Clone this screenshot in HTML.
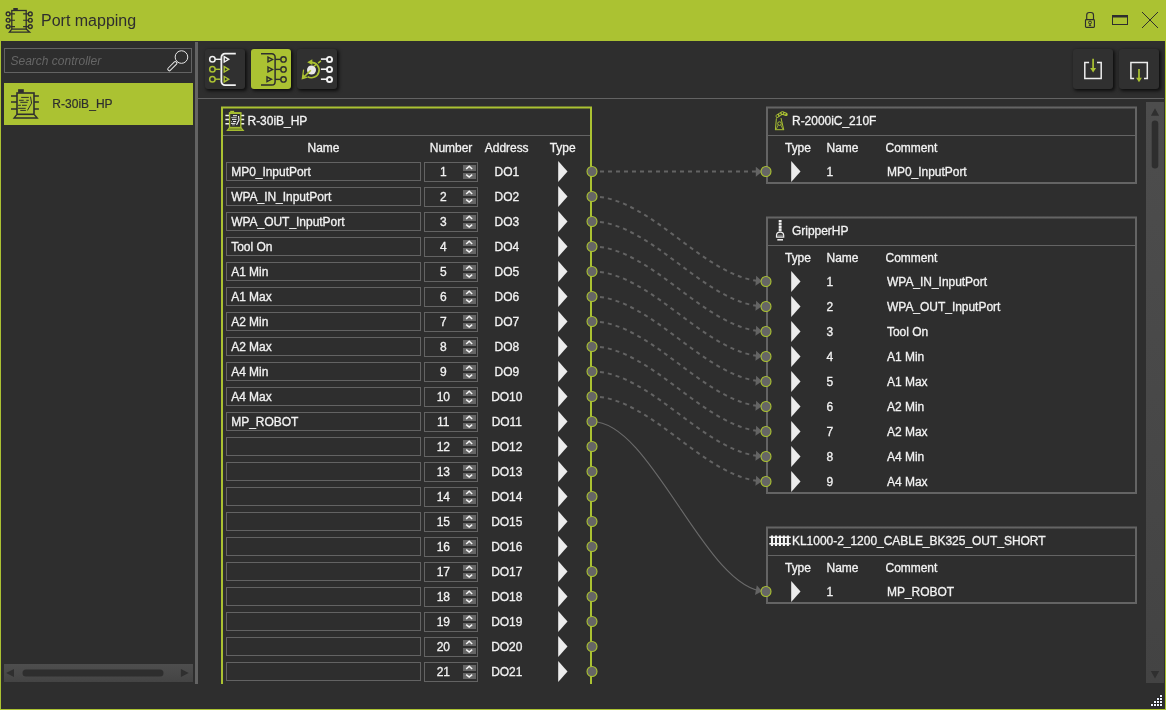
<!DOCTYPE html>
<html><head><meta charset="utf-8"><title>Port mapping</title>
<style>
html,body{margin:0;padding:0;background:#2E2E2E;}
body{width:1166px;height:710px;overflow:hidden;font-family:"Liberation Sans",sans-serif;font-size:12px;color:#F2F2F2;}
#win{will-change:transform;position:absolute;left:0;top:0;width:1166px;height:710px;background:#2E2E2E;overflow:hidden;}
#win:after{content:"";position:absolute;left:0;top:0;width:1164px;height:708px;border:1px solid #ABC232;pointer-events:none;}
#title{position:absolute;left:0;top:0;width:1166px;height:41px;background:#ABC232;}
#title .cap{position:absolute;left:41px;top:12px;font-size:16px;line-height:18px;color:#2E2E2E;white-space:nowrap;}
#title svg{position:absolute;}
/* left panel */
#search{position:absolute;left:4px;top:48px;width:186px;height:23px;border:1px solid #636363;}
#search span{position:absolute;left:5.5px;top:5px;font-style:italic;color:#666;line-height:14px;white-space:nowrap;}
#search svg{position:absolute;left:151px;top:-3px;}
#item{position:absolute;left:4px;top:83px;width:189px;height:42px;background:#ABC232;}
#item span{position:absolute;left:48.2px;top:14px;letter-spacing:0.05px;-webkit-text-stroke:0.2px #2E2E2E;line-height:14px;color:#2E2E2E;white-space:nowrap;}
#item svg{position:absolute;left:0;top:0;}
#hsb{position:absolute;left:4px;top:664px;}
#split{position:absolute;left:195px;top:42px;width:3px;height:642px;background:#636363;}
#tsep{position:absolute;left:198px;top:98px;width:966px;height:1px;background:#636363;}
.tb{position:absolute;top:49px;width:40px;height:40px;border-radius:3px;background:#303030;box-shadow:1.5px 1.5px 3.5px rgba(0,0,0,.7);}
.tb.on{background:#ABC232;}
.tb svg{position:absolute;left:0;top:0;}
/* canvas */
#canvas{position:absolute;left:198px;top:99px;width:966px;height:585px;overflow:hidden;}
#wires,#dots{position:absolute;left:0;top:0;}
.wd{fill:none;stroke:#636363;stroke-width:2;stroke-dasharray:4 4;stroke-dashoffset:-8;}
.ws{fill:none;stroke:#6A6A6A;stroke-width:1.15;}
.ah{fill:#646464;stroke:none;}
.at{fill:none;stroke:#666;stroke-width:2;}
.pc{fill:#666;stroke:#ABC232;stroke-width:1.08;}
.t,.nm,.nb span{-webkit-text-stroke:0.3px #F2F2F2;letter-spacing:-0.03px;}
.t{position:absolute;line-height:14px;white-space:nowrap;color:#F2F2F2;}
.t.c{text-align:center;}
.hb{position:absolute;height:3px;}
.hb.g{background:linear-gradient(to bottom,rgba(171,194,50,.5) 0,rgba(171,194,50,.5) 1px,#ABC232 1px,#ABC232 2px,rgba(171,194,50,.5) 2px,rgba(171,194,50,.5) 3px);}
.hb.y{background:linear-gradient(to bottom,rgba(100,100,100,.5) 0,rgba(100,100,100,.5) 1px,#646464 1px,#646464 2px,rgba(100,100,100,.5) 2px,rgba(100,100,100,.5) 3px);}
.vb{position:absolute;width:2px;}
.bb{position:absolute;height:2px;}
.g{background:#ABC232;}
.y{background:#646464;}
.sep{position:absolute;height:1px;background:#646464;}
svg.ico{position:absolute;}
.nm{position:absolute;box-sizing:border-box;width:195px;height:19px;border:1px solid #636363;padding-left:4.2px;line-height:19px;white-space:nowrap;}
.nb{position:absolute;box-sizing:border-box;width:54px;height:20px;border:1px solid #636363;}
.nb span{position:absolute;left:-0.7px;top:2px;width:38px;text-align:center;line-height:14px;}
.nb svg{position:absolute;left:38px;top:2px;}
.sb{fill:#666;}
.sc{fill:none;stroke:#F4F4F4;stroke-width:1.5;}
svg.tri{position:absolute;}
svg.tri path{fill:#ECECEC;}
#vsb{position:absolute;left:948px;top:3px;}
#grip{position:absolute;left:1150px;top:694px;}

</style></head><body>
<div id="win">
<div id="title">
<svg style="left:0;top:0" width="40" height="40" viewBox="0 0 40 40" fill="none" stroke="#2E2E2E" stroke-width="1.3">
<rect x="11.8" y="10.5" width="14.4" height="18.6"/>
<rect x="13.3" y="8" width="4.5" height="2.2" fill="#2E2E2E" stroke="none"/>
<path d="M11.8,29.1 L9.4,32.2 L29.6,32.2 L26.2,29.1" stroke-width="1.3"/>
<circle cx="8.1" cy="13.9" r="1.9" stroke-width="1.4"/><circle cx="8.1" cy="20.25" r="1.9" stroke-width="1.4"/><circle cx="8.1" cy="26.6" r="1.9" stroke-width="1.4"/>
<circle cx="30.3" cy="13.9" r="1.9" stroke-width="1.4"/><circle cx="30.3" cy="20.25" r="1.9" stroke-width="1.4"/><circle cx="30.3" cy="26.6" r="1.9" stroke-width="1.4"/>
<path d="M10.2,13.9H15M10.2,20.25H15M10.2,26.6H15M23.1,13.9H28.2M23.1,20.25H28.2M23.1,26.6H28.2" stroke-width="1.2"/>
</svg>
<div class="cap">Port mapping</div>
<svg style="left:1083px;top:10px" width="14" height="20" viewBox="0 0 14 20" fill="none" stroke="#2E2E2E" stroke-width="1.15">
<rect x="2.5" y="9.6" width="8.9" height="7.7" rx="0.9"/>
<path d="M3.7,9.6 V5.2 Q3.7,2.5 6.3,2.5 H7.9 Q10.5,2.5 10.5,5.2 V9.6"/>
<circle cx="7" cy="12.5" r="1.45" stroke-width="1"/><path d="M7,14 V15.2 M5.8,15.5 H8.2" stroke-width="0.9"/>
</svg>
<svg style="left:1111px;top:13px" width="18" height="14" viewBox="0 0 18 14" fill="none" stroke="#2E2E2E" stroke-width="1">
<rect x="1.5" y="2.5" width="15" height="9"/><rect x="1" y="2" width="16" height="2.5" fill="#2E2E2E" stroke="none"/>
</svg>
<svg style="left:1140px;top:10px" width="20" height="20" viewBox="0 0 20 20" fill="none" stroke="#2E2E2E" stroke-width="1">
<path d="M2,2 L18,18 M18,2 L2,18"/>
</svg>
</div>

<div id="search"><span>Search controller</span>
<svg width="40" height="30" viewBox="156 46 40 30" fill="none" stroke="#E6E6E6" stroke-width="1"><circle cx="181.45" cy="57.05" r="6.3"/><rect transform="translate(176.3,62.2) rotate(135)" x="0" y="-1.55" width="11.3" height="3.1" rx="1.2"/></svg>
</div>
<div id="item">
<svg width="44" height="42" viewBox="4 83 44 42" fill="none" stroke="#2E2E2E" stroke-width="1.6">
<rect x="17" y="93" width="17" height="21.3"/>
<rect x="18.1" y="89.2" width="5.7" height="3.6" fill="#2E2E2E" stroke="none"/>
<path d="M16.6,114.8 L14,118 L37.3,118 L34.4,114.8" stroke-width="1.3"/>
<path d="M11,96.1H17M11,102.1H17M11,109H17M34,96.1H38.9M34,102.1H38.9M34,109H38.9" stroke-width="1.5"/>
<path d="M21.2,97.4H28.8M18.9,100.3H23.7M26.3,100.3H28.8M20.3,102.3H27.7M18.1,105.3H20.9M22,105.3H26.8M18.1,108.3H25.7M20.3,110.4H25.9" stroke-width="1"/>
<path d="M30.5,96.7 L31.6,103.2 L27.4,110.5" stroke-width="1"/>
</svg>
<span>R-30iB_HP</span></div>
<svg id="hsb" width="189" height="18" viewBox="4 664 189 18"><defs><linearGradient id="hg" x1="0" y1="0" x2="0" y2="1"><stop offset="0" stop-color="#4E4E4E"/><stop offset="1" stop-color="#444444"/></linearGradient></defs><rect x="4" y="664" width="189" height="18" fill="url(#hg)"/><path fill="#2F2F2F" d="M6.1,673 L14,668.9 L14,677.1 Z M188.7,673 L180.9,668.9 L180.9,677.1 Z"/><rect x="22.5" y="669.4" width="141" height="7" rx="3.5" fill="#2E2E2E"/></svg>
<div id="split"></div>

<div id="tsep"></div>
<div class="tb" style="left:205px">
<svg width="40" height="40" viewBox="0 0 40 40" fill="none" stroke-width="1.4">
<path d="M30.8,4.7 H20 A3.6,3.6 0 0 0 16.4,8.3 V32.5 A3.6,3.6 0 0 0 20,36.1 H30.8" stroke="#F2F2F2" stroke-width="1.8"/>
<circle cx="7.4" cy="10.3" r="2.75" stroke="#F2F2F2" stroke-width="1.5"/><path d="M10.2,10.3 H16" stroke="#F2F2F2"/><path d="M19.2,7.6 L23.7,10.3 L19.2,13 Z" stroke="#F2F2F2"/>
<circle cx="7.4" cy="20.3" r="2.75" stroke="#ABC232" stroke-width="1.5"/><path d="M10.2,20.3 H15.6" stroke="#ABC232"/><path d="M19.2,17.6 L23.7,20.3 L19.2,23 Z" stroke="#ABC232"/>
<circle cx="7.4" cy="30.2" r="2.75" stroke="#ABC232" stroke-width="1.5"/><path d="M10.2,30.2 H15.6" stroke="#ABC232"/><path d="M19.2,27.5 L23.7,30.2 L19.2,32.9 Z" stroke="#ABC232"/>
</svg></div>
<div class="tb on" style="left:251px">
<svg width="40" height="40" viewBox="0 0 40 40" fill="none" stroke="#2E2E2E" stroke-width="1.4">
<path d="M10,4.8 H20.8 A3.3,3.3 0 0 1 24.1,8.1 V32.8 A3.3,3.3 0 0 1 20.8,36.1 H10" stroke-width="1.5"/>
<path d="M17,8.1 L21.5,10.5 L17,12.9 Z"/><path d="M24.1,10.4 H29.6"/><circle cx="32.5" cy="10.4" r="2.7"/>
<path d="M17,18 L21.5,20.4 L17,22.8 Z"/><path d="M24.1,20.4 H29.6"/><circle cx="32.5" cy="20.4" r="2.7"/>
<path d="M16,27.9 L20.5,30.3 L16,32.7 Z"/><path d="M24.1,30.4 H29.6"/><circle cx="32.5" cy="30.4" r="2.7"/>
</svg></div>
<div class="tb" style="left:297px">
<svg width="40" height="40" viewBox="0 0 40 40" fill="none" stroke-width="1.4">
<circle cx="32.5" cy="10.4" r="2.55" stroke="#F2F2F2" stroke-width="1.9"/><path d="M23.9,10.1 H30" stroke="#F2F2F2" stroke-width="1.6"/>
<circle cx="32.5" cy="20.4" r="2.55" stroke="#F2F2F2" stroke-width="1.9"/><path d="M23.9,20.2 H30" stroke="#F2F2F2" stroke-width="1.6"/>
<circle cx="32.5" cy="30.5" r="2.55" stroke="#F2F2F2" stroke-width="1.9"/><path d="M23.9,30.2 H30" stroke="#F2F2F2" stroke-width="1.6"/>
<circle cx="14.5" cy="21" r="4.5" fill="#E9E9E9"/>
<path d="M14.3,13.3 A7.7,7.7 0 1 1 10.6,27.7" stroke="#ABC232" stroke-width="1.7"/>
<path d="M10.2,13.2 L15.3,10.2 L15.3,16 Z" fill="#ABC232"/>
<path d="M23.9,11.9 L16.8,17.4" stroke="#ABC232" stroke-dasharray="3.6 2.6" stroke-width="1.5"/>
<path d="M13.8,21.2 L7.5,27.5" stroke="#ABC232" stroke-width="1.6"/>
<path d="M6.6,20.6 L5.3,29.6 L10.3,28.1" stroke="#ABC232" stroke-width="1.2"/><path d="M4.8,30.2 L6.2,25 L9.2,28.4 Z" fill="#ABC232"/>
</svg></div>
<div class="tb" style="left:1073px">
<svg width="40" height="40" viewBox="0 0 40 40" fill="none" stroke-width="1.5">
<path d="M16.1,13.5 H11.8 V29.5 H28.2 V13.5 H24" stroke="#EDEDED"/>
<path d="M20.1,9.8 V20" stroke="#ABC232" stroke-width="1.7"/><path d="M17.2,18.9 L23.1,18.9 L20.1,23.5 Z" fill="#ABC232"/>
</svg></div>
<div class="tb" style="left:1119px">
<svg width="40" height="40" viewBox="0 0 40 40" fill="none" stroke-width="1.5">
<path d="M15.1,29.5 H11.9 V13.5 H28.3 V29.5 H25" stroke="#EDEDED"/>
<path d="M20,19.9 V30" stroke="#ABC232" stroke-width="1.7"/><path d="M17.1,28.8 L22.9,28.8 L20,33.2 Z" fill="#ABC232"/>
</svg></div>

<div id="canvas">
<svg id="wires" width="966" height="585" viewBox="198 99 966 585">
<path class="wd" d="M592.0,171.5 L766.0,171.5"/>
<path class="wd" d="M592.0,196.5 C652.0,196.5 706.0,281.5 766.0,281.5"/>
<path class="wd" d="M592.0,221.5 C652.0,221.5 706.0,306.5 766.0,306.5"/>
<path class="wd" d="M592.0,246.5 C652.0,246.5 706.0,331.5 766.0,331.5"/>
<path class="wd" d="M592.0,271.5 C652.0,271.5 706.0,356.5 766.0,356.5"/>
<path class="wd" d="M592.0,296.5 C652.0,296.5 706.0,381.5 766.0,381.5"/>
<path class="wd" d="M592.0,321.5 C652.0,321.5 706.0,406.5 766.0,406.5"/>
<path class="wd" d="M592.0,346.5 C652.0,346.5 706.0,431.5 766.0,431.5"/>
<path class="wd" d="M592.0,371.5 C652.0,371.5 706.0,456.5 766.0,456.5"/>
<path class="wd" d="M592.0,396.5 C652.0,396.5 706.0,481.5 766.0,481.5"/>
<path class="ws" d="M592.0,421.5 C652.0,421.5 706.0,591.5 766.0,591.5"/>
<path class="ah" transform="translate(762,171.8) rotate(0)" d="M0,0 L-6.2,-5 L-6.2,5 Z"/>
<path class="ah" transform="translate(762,281.2) rotate(4.5)" d="M0,0 L-6.2,-5 L-6.2,5 Z"/>
<path class="ah" transform="translate(762,306.2) rotate(4.5)" d="M0,0 L-6.2,-5 L-6.2,5 Z"/>
<path class="ah" transform="translate(762,331.2) rotate(4.5)" d="M0,0 L-6.2,-5 L-6.2,5 Z"/>
<path class="ah" transform="translate(762,356.2) rotate(4.5)" d="M0,0 L-6.2,-5 L-6.2,5 Z"/>
<path class="ah" transform="translate(762,381.2) rotate(4.5)" d="M0,0 L-6.2,-5 L-6.2,5 Z"/>
<path class="ah" transform="translate(762,406.2) rotate(4.5)" d="M0,0 L-6.2,-5 L-6.2,5 Z"/>
<path class="ah" transform="translate(762,431.2) rotate(4.5)" d="M0,0 L-6.2,-5 L-6.2,5 Z"/>
<path class="ah" transform="translate(762,456.2) rotate(4.5)" d="M0,0 L-6.2,-5 L-6.2,5 Z"/>
<path class="ah" transform="translate(762,481.2) rotate(4.5)" d="M0,0 L-6.2,-5 L-6.2,5 Z"/>
<path class="ah" transform="translate(762,591.2) rotate(10.5)" d="M0,0 L-6.2,-5 L-6.2,5 Z"/>
</svg>
<div class="hb g" style="left:23px;top:7px;width:371px"></div>
<div class="vb g" style="left:23px;top:8px;height:600px"></div>
<div class="vb g" style="left:392px;top:8px;height:600px"></div>
<div class="sep" style="left:25px;top:36px;width:367px"></div>
<svg class="ico" style="left:26px;top:11px" width="22" height="22" viewBox="224 110 22 22" fill="none" stroke-width="1">
<path d="M225.4,115.5H229.4M225.4,119.5H229.4M225.4,123.7H229.4M241,115.5H244.2M241,119.5H244.2M241,123.7H244.2" stroke="#F4F4F4" stroke-width="1.4"/>
<rect x="229.55" y="113.2" width="11.25" height="14.3" stroke="#A5BC30" stroke-width="1.35"/>
<rect x="228.9" y="112.1" width="12.55" height="1.9" fill="#A5BC30"/>
<rect x="230.2" y="110.8" width="3.9" height="1.4" fill="#ABC232"/>
<path d="M229.3,127.9 L227.3,130.4 L243.3,130.4 L241.1,127.9 Z" stroke="#A5BC30" stroke-width="1.1" fill="#6F8026"/>
<path d="M233,115.7H237M232,119.4H236.6M233,121.5H236.1M231,123.4H235.5" stroke="#F0F0F0" stroke-width="1"/>
<path d="M231.2,117.6H236.6M231,121.5H231.8M232,124.8H234.8" stroke="#BDBDBD" stroke-width="0.9"/>
<path d="M238.5,116 L239,120.1 L236.5,125" stroke="#F4F4F4" stroke-width="1.1"/>
</svg>

<div class="t" style="left:49.5px;top:15px">R-30iB_HP</div>
<div class="t c" style="left:28px;top:42px;width:195px">Name</div>
<div class="t c" style="left:226px;top:42px;width:54px">Number</div>
<div class="t c" style="left:278.7px;top:42px;width:60px">Address</div>
<div class="t c" style="left:334.7px;top:42px;width:60px">Type</div>
<div class="nm" style="left:28px;top:63px">MP0_InputPort</div>
<div class="nb" style="left:226px;top:63px"><span>1</span><svg width="13" height="14" viewBox="0 0 13 14"><path class="sb" d="M0,0H13V6H0ZM0,8H13V14H0Z"/><path class="sc" d="M3.2,3.95 L6.2,1.2 L9.2,3.95 M3.2,9.6 L6.2,12.1 L9.2,9.6"/></svg></div>
<div class="t c" style="left:278.8px;top:66px;width:60px">DO1</div>
<svg class="tri" style="left:359px;top:62px" width="12" height="22"><path d="M1.2,0.1 L10.5,10.5 L1.2,20.9 Z"/></svg>
<div class="nm" style="left:28px;top:88px">WPA_IN_InputPort</div>
<div class="nb" style="left:226px;top:88px"><span>2</span><svg width="13" height="14" viewBox="0 0 13 14"><path class="sb" d="M0,0H13V6H0ZM0,8H13V14H0Z"/><path class="sc" d="M3.2,3.95 L6.2,1.2 L9.2,3.95 M3.2,9.6 L6.2,12.1 L9.2,9.6"/></svg></div>
<div class="t c" style="left:278.8px;top:91px;width:60px">DO2</div>
<svg class="tri" style="left:359px;top:87px" width="12" height="22"><path d="M1.2,0.1 L10.5,10.5 L1.2,20.9 Z"/></svg>
<div class="nm" style="left:28px;top:113px">WPA_OUT_InputPort</div>
<div class="nb" style="left:226px;top:113px"><span>3</span><svg width="13" height="14" viewBox="0 0 13 14"><path class="sb" d="M0,0H13V6H0ZM0,8H13V14H0Z"/><path class="sc" d="M3.2,3.95 L6.2,1.2 L9.2,3.95 M3.2,9.6 L6.2,12.1 L9.2,9.6"/></svg></div>
<div class="t c" style="left:278.8px;top:116px;width:60px">DO3</div>
<svg class="tri" style="left:359px;top:112px" width="12" height="22"><path d="M1.2,0.1 L10.5,10.5 L1.2,20.9 Z"/></svg>
<div class="nm" style="left:28px;top:138px">Tool On</div>
<div class="nb" style="left:226px;top:138px"><span>4</span><svg width="13" height="14" viewBox="0 0 13 14"><path class="sb" d="M0,0H13V6H0ZM0,8H13V14H0Z"/><path class="sc" d="M3.2,3.95 L6.2,1.2 L9.2,3.95 M3.2,9.6 L6.2,12.1 L9.2,9.6"/></svg></div>
<div class="t c" style="left:278.8px;top:141px;width:60px">DO4</div>
<svg class="tri" style="left:359px;top:137px" width="12" height="22"><path d="M1.2,0.1 L10.5,10.5 L1.2,20.9 Z"/></svg>
<div class="nm" style="left:28px;top:163px">A1 Min</div>
<div class="nb" style="left:226px;top:163px"><span>5</span><svg width="13" height="14" viewBox="0 0 13 14"><path class="sb" d="M0,0H13V6H0ZM0,8H13V14H0Z"/><path class="sc" d="M3.2,3.95 L6.2,1.2 L9.2,3.95 M3.2,9.6 L6.2,12.1 L9.2,9.6"/></svg></div>
<div class="t c" style="left:278.8px;top:166px;width:60px">DO5</div>
<svg class="tri" style="left:359px;top:162px" width="12" height="22"><path d="M1.2,0.1 L10.5,10.5 L1.2,20.9 Z"/></svg>
<div class="nm" style="left:28px;top:188px">A1 Max</div>
<div class="nb" style="left:226px;top:188px"><span>6</span><svg width="13" height="14" viewBox="0 0 13 14"><path class="sb" d="M0,0H13V6H0ZM0,8H13V14H0Z"/><path class="sc" d="M3.2,3.95 L6.2,1.2 L9.2,3.95 M3.2,9.6 L6.2,12.1 L9.2,9.6"/></svg></div>
<div class="t c" style="left:278.8px;top:191px;width:60px">DO6</div>
<svg class="tri" style="left:359px;top:187px" width="12" height="22"><path d="M1.2,0.1 L10.5,10.5 L1.2,20.9 Z"/></svg>
<div class="nm" style="left:28px;top:213px">A2 Min</div>
<div class="nb" style="left:226px;top:213px"><span>7</span><svg width="13" height="14" viewBox="0 0 13 14"><path class="sb" d="M0,0H13V6H0ZM0,8H13V14H0Z"/><path class="sc" d="M3.2,3.95 L6.2,1.2 L9.2,3.95 M3.2,9.6 L6.2,12.1 L9.2,9.6"/></svg></div>
<div class="t c" style="left:278.8px;top:216px;width:60px">DO7</div>
<svg class="tri" style="left:359px;top:212px" width="12" height="22"><path d="M1.2,0.1 L10.5,10.5 L1.2,20.9 Z"/></svg>
<div class="nm" style="left:28px;top:238px">A2 Max</div>
<div class="nb" style="left:226px;top:238px"><span>8</span><svg width="13" height="14" viewBox="0 0 13 14"><path class="sb" d="M0,0H13V6H0ZM0,8H13V14H0Z"/><path class="sc" d="M3.2,3.95 L6.2,1.2 L9.2,3.95 M3.2,9.6 L6.2,12.1 L9.2,9.6"/></svg></div>
<div class="t c" style="left:278.8px;top:241px;width:60px">DO8</div>
<svg class="tri" style="left:359px;top:237px" width="12" height="22"><path d="M1.2,0.1 L10.5,10.5 L1.2,20.9 Z"/></svg>
<div class="nm" style="left:28px;top:263px">A4 Min</div>
<div class="nb" style="left:226px;top:263px"><span>9</span><svg width="13" height="14" viewBox="0 0 13 14"><path class="sb" d="M0,0H13V6H0ZM0,8H13V14H0Z"/><path class="sc" d="M3.2,3.95 L6.2,1.2 L9.2,3.95 M3.2,9.6 L6.2,12.1 L9.2,9.6"/></svg></div>
<div class="t c" style="left:278.8px;top:266px;width:60px">DO9</div>
<svg class="tri" style="left:359px;top:262px" width="12" height="22"><path d="M1.2,0.1 L10.5,10.5 L1.2,20.9 Z"/></svg>
<div class="nm" style="left:28px;top:288px">A4 Max</div>
<div class="nb" style="left:226px;top:288px"><span>10</span><svg width="13" height="14" viewBox="0 0 13 14"><path class="sb" d="M0,0H13V6H0ZM0,8H13V14H0Z"/><path class="sc" d="M3.2,3.95 L6.2,1.2 L9.2,3.95 M3.2,9.6 L6.2,12.1 L9.2,9.6"/></svg></div>
<div class="t c" style="left:278.8px;top:291px;width:60px">DO10</div>
<svg class="tri" style="left:359px;top:287px" width="12" height="22"><path d="M1.2,0.1 L10.5,10.5 L1.2,20.9 Z"/></svg>
<div class="nm" style="left:28px;top:313px">MP_ROBOT</div>
<div class="nb" style="left:226px;top:313px"><span>11</span><svg width="13" height="14" viewBox="0 0 13 14"><path class="sb" d="M0,0H13V6H0ZM0,8H13V14H0Z"/><path class="sc" d="M3.2,3.95 L6.2,1.2 L9.2,3.95 M3.2,9.6 L6.2,12.1 L9.2,9.6"/></svg></div>
<div class="t c" style="left:278.8px;top:316px;width:60px">DO11</div>
<svg class="tri" style="left:359px;top:312px" width="12" height="22"><path d="M1.2,0.1 L10.5,10.5 L1.2,20.9 Z"/></svg>
<div class="nm" style="left:28px;top:338px"></div>
<div class="nb" style="left:226px;top:338px"><span>12</span><svg width="13" height="14" viewBox="0 0 13 14"><path class="sb" d="M0,0H13V6H0ZM0,8H13V14H0Z"/><path class="sc" d="M3.2,3.95 L6.2,1.2 L9.2,3.95 M3.2,9.6 L6.2,12.1 L9.2,9.6"/></svg></div>
<div class="t c" style="left:278.8px;top:341px;width:60px">DO12</div>
<svg class="tri" style="left:359px;top:337px" width="12" height="22"><path d="M1.2,0.1 L10.5,10.5 L1.2,20.9 Z"/></svg>
<div class="nm" style="left:28px;top:363px"></div>
<div class="nb" style="left:226px;top:363px"><span>13</span><svg width="13" height="14" viewBox="0 0 13 14"><path class="sb" d="M0,0H13V6H0ZM0,8H13V14H0Z"/><path class="sc" d="M3.2,3.95 L6.2,1.2 L9.2,3.95 M3.2,9.6 L6.2,12.1 L9.2,9.6"/></svg></div>
<div class="t c" style="left:278.8px;top:366px;width:60px">DO13</div>
<svg class="tri" style="left:359px;top:362px" width="12" height="22"><path d="M1.2,0.1 L10.5,10.5 L1.2,20.9 Z"/></svg>
<div class="nm" style="left:28px;top:388px"></div>
<div class="nb" style="left:226px;top:388px"><span>14</span><svg width="13" height="14" viewBox="0 0 13 14"><path class="sb" d="M0,0H13V6H0ZM0,8H13V14H0Z"/><path class="sc" d="M3.2,3.95 L6.2,1.2 L9.2,3.95 M3.2,9.6 L6.2,12.1 L9.2,9.6"/></svg></div>
<div class="t c" style="left:278.8px;top:391px;width:60px">DO14</div>
<svg class="tri" style="left:359px;top:387px" width="12" height="22"><path d="M1.2,0.1 L10.5,10.5 L1.2,20.9 Z"/></svg>
<div class="nm" style="left:28px;top:413px"></div>
<div class="nb" style="left:226px;top:413px"><span>15</span><svg width="13" height="14" viewBox="0 0 13 14"><path class="sb" d="M0,0H13V6H0ZM0,8H13V14H0Z"/><path class="sc" d="M3.2,3.95 L6.2,1.2 L9.2,3.95 M3.2,9.6 L6.2,12.1 L9.2,9.6"/></svg></div>
<div class="t c" style="left:278.8px;top:416px;width:60px">DO15</div>
<svg class="tri" style="left:359px;top:412px" width="12" height="22"><path d="M1.2,0.1 L10.5,10.5 L1.2,20.9 Z"/></svg>
<div class="nm" style="left:28px;top:438px"></div>
<div class="nb" style="left:226px;top:438px"><span>16</span><svg width="13" height="14" viewBox="0 0 13 14"><path class="sb" d="M0,0H13V6H0ZM0,8H13V14H0Z"/><path class="sc" d="M3.2,3.95 L6.2,1.2 L9.2,3.95 M3.2,9.6 L6.2,12.1 L9.2,9.6"/></svg></div>
<div class="t c" style="left:278.8px;top:441px;width:60px">DO16</div>
<svg class="tri" style="left:359px;top:437px" width="12" height="22"><path d="M1.2,0.1 L10.5,10.5 L1.2,20.9 Z"/></svg>
<div class="nm" style="left:28px;top:463px"></div>
<div class="nb" style="left:226px;top:463px"><span>17</span><svg width="13" height="14" viewBox="0 0 13 14"><path class="sb" d="M0,0H13V6H0ZM0,8H13V14H0Z"/><path class="sc" d="M3.2,3.95 L6.2,1.2 L9.2,3.95 M3.2,9.6 L6.2,12.1 L9.2,9.6"/></svg></div>
<div class="t c" style="left:278.8px;top:466px;width:60px">DO17</div>
<svg class="tri" style="left:359px;top:462px" width="12" height="22"><path d="M1.2,0.1 L10.5,10.5 L1.2,20.9 Z"/></svg>
<div class="nm" style="left:28px;top:488px"></div>
<div class="nb" style="left:226px;top:488px"><span>18</span><svg width="13" height="14" viewBox="0 0 13 14"><path class="sb" d="M0,0H13V6H0ZM0,8H13V14H0Z"/><path class="sc" d="M3.2,3.95 L6.2,1.2 L9.2,3.95 M3.2,9.6 L6.2,12.1 L9.2,9.6"/></svg></div>
<div class="t c" style="left:278.8px;top:491px;width:60px">DO18</div>
<svg class="tri" style="left:359px;top:487px" width="12" height="22"><path d="M1.2,0.1 L10.5,10.5 L1.2,20.9 Z"/></svg>
<div class="nm" style="left:28px;top:513px"></div>
<div class="nb" style="left:226px;top:513px"><span>19</span><svg width="13" height="14" viewBox="0 0 13 14"><path class="sb" d="M0,0H13V6H0ZM0,8H13V14H0Z"/><path class="sc" d="M3.2,3.95 L6.2,1.2 L9.2,3.95 M3.2,9.6 L6.2,12.1 L9.2,9.6"/></svg></div>
<div class="t c" style="left:278.8px;top:516px;width:60px">DO19</div>
<svg class="tri" style="left:359px;top:512px" width="12" height="22"><path d="M1.2,0.1 L10.5,10.5 L1.2,20.9 Z"/></svg>
<div class="nm" style="left:28px;top:538px"></div>
<div class="nb" style="left:226px;top:538px"><span>20</span><svg width="13" height="14" viewBox="0 0 13 14"><path class="sb" d="M0,0H13V6H0ZM0,8H13V14H0Z"/><path class="sc" d="M3.2,3.95 L6.2,1.2 L9.2,3.95 M3.2,9.6 L6.2,12.1 L9.2,9.6"/></svg></div>
<div class="t c" style="left:278.8px;top:541px;width:60px">DO20</div>
<svg class="tri" style="left:359px;top:537px" width="12" height="22"><path d="M1.2,0.1 L10.5,10.5 L1.2,20.9 Z"/></svg>
<div class="nm" style="left:28px;top:563px"></div>
<div class="nb" style="left:226px;top:563px"><span>21</span><svg width="13" height="14" viewBox="0 0 13 14"><path class="sb" d="M0,0H13V6H0ZM0,8H13V14H0Z"/><path class="sc" d="M3.2,3.95 L6.2,1.2 L9.2,3.95 M3.2,9.6 L6.2,12.1 L9.2,9.6"/></svg></div>
<div class="t c" style="left:278.8px;top:566px;width:60px">DO21</div>
<svg class="tri" style="left:359px;top:562px" width="12" height="22"><path d="M1.2,0.1 L10.5,10.5 L1.2,20.9 Z"/></svg>
<div class="hb y" style="left:568px;top:7px;width:371px"></div>
<div class="vb y" style="left:568px;top:8px;height:76px"></div>
<div class="vb y" style="left:937px;top:8px;height:76px"></div>
<div class="bb y" style="left:568px;top:83px;width:371px"></div>
<div class="sep" style="left:570px;top:36px;width:367px"></div>
<svg class="ico" style="left:574px;top:10px" width="18" height="24" viewBox="772 109 18 24" fill="none" stroke="#ABC232" stroke-width="1">
<path d="M777.3,116.1 L782.3,112.9 L786,114.3" stroke-width="3.5" stroke-linecap="round" stroke-linejoin="round"/>
<circle cx="777.3" cy="116" r="1" fill="#2E2E2E" stroke="none"/><circle cx="779.9" cy="114.4" r="0.85" fill="#2E2E2E" stroke="none"/><circle cx="782.4" cy="112.9" r="0.85" fill="#2E2E2E" stroke="none"/><circle cx="784.9" cy="113.8" r="0.8" fill="#2E2E2E" stroke="none"/>
<path d="M775.4,129.7 L776.4,118.3 M783.7,129.7 L781,118 M775,129.7 H784.1"/>
<circle cx="779.5" cy="123.6" r="1.8"/>
<path d="M776.4,129 L778,125.2 M782.8,129 L781,125.2" stroke-width="0.8"/>
</svg>

<div class="t" style="left:594px;top:15px">R-2000iC_210F</div>
<div class="t" style="left:587px;top:42px">Type</div>
<div class="t" style="left:628.5px;top:42px">Name</div>
<div class="t" style="left:687.5px;top:42px">Comment</div>
<svg class="tri" style="left:592px;top:62px" width="12" height="22"><path d="M1.2,0.1 L10.5,10.5 L1.2,20.9 Z"/></svg>
<div class="t" style="left:628.5px;top:66px">1</div>
<div class="t" style="left:689px;top:66px">MP0_InputPort</div>
<div class="hb y" style="left:568px;top:117px;width:371px"></div>
<div class="vb y" style="left:568px;top:118px;height:276px"></div>
<div class="vb y" style="left:937px;top:118px;height:276px"></div>
<div class="bb y" style="left:568px;top:393px;width:371px"></div>
<div class="sep" style="left:570px;top:146px;width:367px"></div>
<svg class="ico" style="left:574px;top:120px" width="14" height="24" viewBox="772 219 14 24" fill="none" stroke="#EFEFEF" stroke-width="1.2">
<path d="M780.15,220 V231.6" stroke-width="2.9" stroke-dasharray="2.5 0.45"/>
<rect x="777.3" y="234.6" width="5.7" height="1.7" fill="#777" stroke="none"/>
<path d="M776.5,237.2 V235.4 A3.6,3.2 0 0 1 783.7,235.4 V237.2 Z"/>
<path d="M777.3,239.8 H783" stroke-width="1.5"/>
</svg>

<div class="t" style="left:594px;top:125px">GripperHP</div>
<div class="t" style="left:587px;top:152px">Type</div>
<div class="t" style="left:628.5px;top:152px">Name</div>
<div class="t" style="left:687.5px;top:152px">Comment</div>
<svg class="tri" style="left:592px;top:172px" width="12" height="22"><path d="M1.2,0.1 L10.5,10.5 L1.2,20.9 Z"/></svg>
<div class="t" style="left:628.5px;top:176px">1</div>
<div class="t" style="left:689px;top:176px">WPA_IN_InputPort</div>
<svg class="tri" style="left:592px;top:197px" width="12" height="22"><path d="M1.2,0.1 L10.5,10.5 L1.2,20.9 Z"/></svg>
<div class="t" style="left:628.5px;top:201px">2</div>
<div class="t" style="left:689px;top:201px">WPA_OUT_InputPort</div>
<svg class="tri" style="left:592px;top:222px" width="12" height="22"><path d="M1.2,0.1 L10.5,10.5 L1.2,20.9 Z"/></svg>
<div class="t" style="left:628.5px;top:226px">3</div>
<div class="t" style="left:689px;top:226px">Tool On</div>
<svg class="tri" style="left:592px;top:247px" width="12" height="22"><path d="M1.2,0.1 L10.5,10.5 L1.2,20.9 Z"/></svg>
<div class="t" style="left:628.5px;top:251px">4</div>
<div class="t" style="left:689px;top:251px">A1 Min</div>
<svg class="tri" style="left:592px;top:272px" width="12" height="22"><path d="M1.2,0.1 L10.5,10.5 L1.2,20.9 Z"/></svg>
<div class="t" style="left:628.5px;top:276px">5</div>
<div class="t" style="left:689px;top:276px">A1 Max</div>
<svg class="tri" style="left:592px;top:297px" width="12" height="22"><path d="M1.2,0.1 L10.5,10.5 L1.2,20.9 Z"/></svg>
<div class="t" style="left:628.5px;top:301px">6</div>
<div class="t" style="left:689px;top:301px">A2 Min</div>
<svg class="tri" style="left:592px;top:322px" width="12" height="22"><path d="M1.2,0.1 L10.5,10.5 L1.2,20.9 Z"/></svg>
<div class="t" style="left:628.5px;top:326px">7</div>
<div class="t" style="left:689px;top:326px">A2 Max</div>
<svg class="tri" style="left:592px;top:347px" width="12" height="22"><path d="M1.2,0.1 L10.5,10.5 L1.2,20.9 Z"/></svg>
<div class="t" style="left:628.5px;top:351px">8</div>
<div class="t" style="left:689px;top:351px">A4 Min</div>
<svg class="tri" style="left:592px;top:372px" width="12" height="22"><path d="M1.2,0.1 L10.5,10.5 L1.2,20.9 Z"/></svg>
<div class="t" style="left:628.5px;top:376px">9</div>
<div class="t" style="left:689px;top:376px">A4 Max</div>
<div class="hb y" style="left:568px;top:427px;width:371px"></div>
<div class="vb y" style="left:568px;top:428px;height:76px"></div>
<div class="vb y" style="left:937px;top:428px;height:76px"></div>
<div class="bb y" style="left:568px;top:503px;width:371px"></div>
<div class="sep" style="left:570px;top:456px;width:367px"></div>
<svg class="ico" style="left:569px;top:432px" width="26" height="18" viewBox="767 531 26 18" fill="none" stroke="#F4F4F4" stroke-width="2.1">
<path d="M772,535.4V546M776,535.4V546M779.95,535.4V546M783.9,535.4V546M787.9,535.4V546"/><path d="M769.3,537.3H790.8M769.3,543.8H790.8" stroke-width="1.6"/>
</svg>

<div class="t" style="left:594px;top:435px">KL1000-2_1200_CABLE_BK325_OUT_SHORT</div>
<div class="t" style="left:587px;top:462px">Type</div>
<div class="t" style="left:628.5px;top:462px">Name</div>
<div class="t" style="left:687.5px;top:462px">Comment</div>
<svg class="tri" style="left:592px;top:482px" width="12" height="22"><path d="M1.2,0.1 L10.5,10.5 L1.2,20.9 Z"/></svg>
<div class="t" style="left:628.5px;top:486px">1</div>
<div class="t" style="left:689px;top:486px">MP_ROBOT</div>
<svg id="dots" width="966" height="585" viewBox="198 99 966 585">
<circle class="pc" cx="592" cy="171.5" r="5"/>
<circle class="pc" cx="592" cy="196.5" r="5"/>
<circle class="pc" cx="592" cy="221.5" r="5"/>
<circle class="pc" cx="592" cy="246.5" r="5"/>
<circle class="pc" cx="592" cy="271.5" r="5"/>
<circle class="pc" cx="592" cy="296.5" r="5"/>
<circle class="pc" cx="592" cy="321.5" r="5"/>
<circle class="pc" cx="592" cy="346.5" r="5"/>
<circle class="pc" cx="592" cy="371.5" r="5"/>
<circle class="pc" cx="592" cy="396.5" r="5"/>
<circle class="pc" cx="592" cy="421.5" r="5"/>
<circle class="pc" cx="592" cy="446.5" r="5"/>
<circle class="pc" cx="592" cy="471.5" r="5"/>
<circle class="pc" cx="592" cy="496.5" r="5"/>
<circle class="pc" cx="592" cy="521.5" r="5"/>
<circle class="pc" cx="592" cy="546.5" r="5"/>
<circle class="pc" cx="592" cy="571.5" r="5"/>
<circle class="pc" cx="592" cy="596.5" r="5"/>
<circle class="pc" cx="592" cy="621.5" r="5"/>
<circle class="pc" cx="592" cy="646.5" r="5"/>
<circle class="pc" cx="592" cy="671.5" r="5"/>
<circle class="pc" cx="766" cy="171.5" r="5"/>
<circle class="pc" cx="766" cy="281.5" r="5"/>
<circle class="pc" cx="766" cy="306.5" r="5"/>
<circle class="pc" cx="766" cy="331.5" r="5"/>
<circle class="pc" cx="766" cy="356.5" r="5"/>
<circle class="pc" cx="766" cy="381.5" r="5"/>
<circle class="pc" cx="766" cy="406.5" r="5"/>
<circle class="pc" cx="766" cy="431.5" r="5"/>
<circle class="pc" cx="766" cy="456.5" r="5"/>
<circle class="pc" cx="766" cy="481.5" r="5"/>
<circle class="pc" cx="766" cy="591.5" r="5"/>
</svg>
<svg id="vsb" width="18" height="581" viewBox="1146 102 18 581"><defs><linearGradient id="vg" x1="0" y1="0" x2="0" y2="1"><stop offset="0" stop-color="#4D4D4D"/><stop offset="1" stop-color="#434343"/></linearGradient></defs><rect x="1146" y="102" width="18" height="581" fill="url(#vg)"/><path fill="#2F2F2F" d="M1155,108.3 L1159.1,115.8 L1150.9,115.8 Z M1150.8,671.1 L1159.2,671.1 L1155,678.5 Z"/><rect x="1151.7" y="120.6" width="6.6" height="48" rx="3.3" fill="#2E2E2E"/></svg>
</div>
<svg id="grip" width="13" height="13" viewBox="0 0 13 13" fill="#EEF2FF" stroke="#1E1E1E" stroke-width="0.7" paint-order="stroke">
<rect x="10" y="1" width="2" height="2"/>
<rect x="7" y="4" width="2" height="2"/><rect x="10" y="4" width="2" height="2"/>
<rect x="4" y="7" width="2" height="2"/><rect x="7" y="7" width="2" height="2"/><rect x="10" y="7" width="2" height="2"/>
<rect x="1" y="10" width="2" height="2"/><rect x="4" y="10" width="2" height="2"/><rect x="7" y="10" width="2" height="2"/><rect x="10" y="10" width="2" height="2"/>
</svg>

</div></body></html>
